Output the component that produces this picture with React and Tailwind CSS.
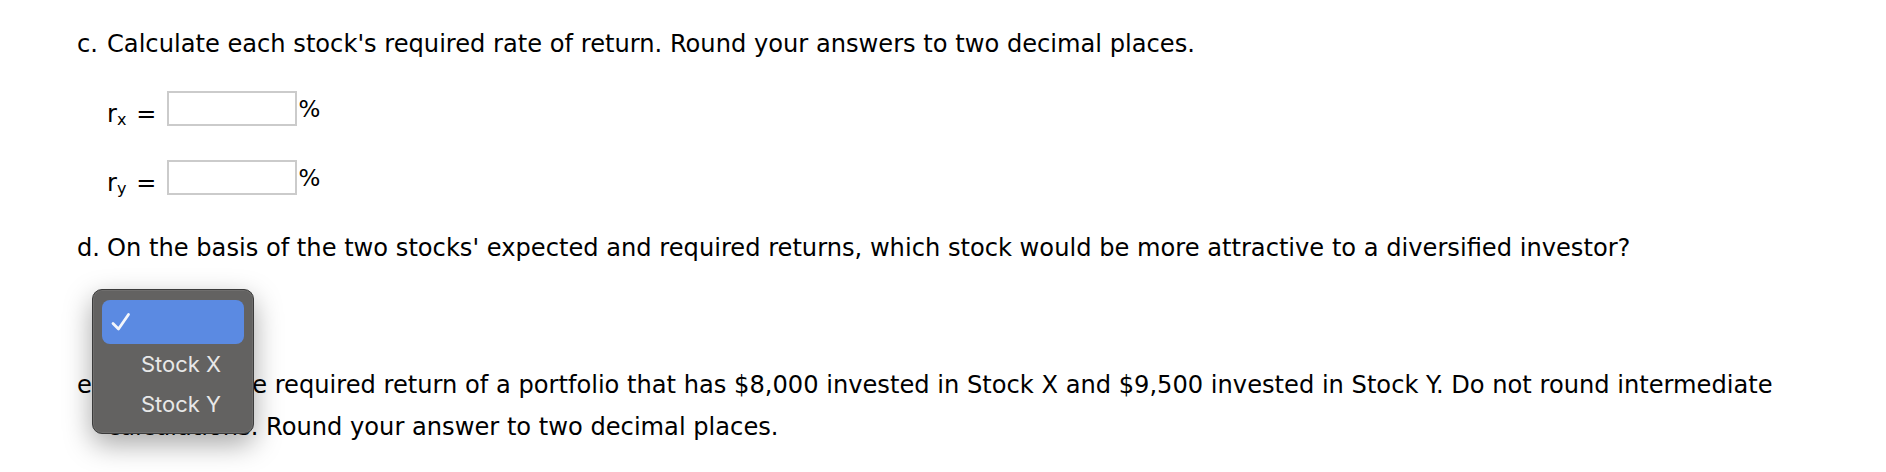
import React from "react";

function Item({ label, children, className = "" }) {
  return (
    <div className={"flex " + className}>
      <span className="w-[30px] shrink-0">{label}</span>
      <div>{children}</div>
    </div>
  );
}

function RateRow({ sub, className = "" }) {
  return (
    <div className={"flex items-end h-[35px] " + className}>
      <span className="text-[24px] leading-none">
        r<span className="text-[16px] relative top-[3px]">{sub}</span>
      </span>
      <span className="text-[24px] leading-none ml-[10px]">=</span>
      <div className="ml-[11px] w-[130px] h-[35px] border-2 border-[#cbcbcb] bg-white" />
      <span className="text-[23px] leading-none ml-[1px] mb-[5px]">%</span>
    </div>
  );
}

export default function App() {
  return (
    <div
      className="relative w-[1886px] h-[472px] bg-white overflow-hidden text-black text-[24.15px] leading-[42px]"
      style={{ fontFamily: '"DejaVu Sans", Verdana, sans-serif' }}
    >
      <div className="pl-[77px] pt-[23px]">
        <Item label="c.">
          Calculate each stock's required rate of return. Round your answers to two decimal places.
        </Item>
        <div className="pl-[30px]">
          <RateRow sub="x" className="mt-[26px]" />
          <RateRow sub="y" className="mt-[34px]" />
        </div>
        <Item label="d." className="mt-[32px]">
          On the basis of the two stocks' expected and required returns, which stock would be more attractive to a diversified investor?
        </Item>
        <div className="h-[95px] pl-[30px]" />
        <Item label="e.">
          <div className="whitespace-nowrap">
            Calculate the required return of a portfolio that has $8,000 invested in Stock X and $9,500 invested in Stock Y. Do not round intermediate
          </div>
          <div className="whitespace-nowrap">
            calculations. Round your answer to two decimal places.
          </div>
        </Item>
      </div>

      <div
        className="absolute left-[92px] top-[289px] w-[162px] h-[145px] rounded-[10px] bg-[#636261] border border-[#3b3b3b] shadow-[0_10px_28px_rgba(0,0,0,0.35),inset_0_0_0_1px_rgba(255,255,255,0.08)] px-[9px] pt-[10px]"
        style={{ fontFamily: 'Inter, "Liberation Sans", sans-serif' }}
      >
        <div className="h-[44px] rounded-[8px] bg-[#5b8ae2] flex items-center pl-[9px]">
          <svg width="20" height="20" viewBox="0 0 20 20" fill="none">
            <path d="M2 11.5 L7.5 17 L17.5 2.5" stroke="#f4f6fb" strokeWidth="2.8" strokeLinecap="round" strokeLinejoin="round" />
          </svg>
        </div>
        <div className="h-[40px] flex items-center pl-[39px] text-[22px] text-[#e8e8e8]">Stock X</div>
        <div className="h-[40px] flex items-center pl-[39px] text-[22px] text-[#e8e8e8]">Stock Y</div>
      </div>
    </div>
  );
}
